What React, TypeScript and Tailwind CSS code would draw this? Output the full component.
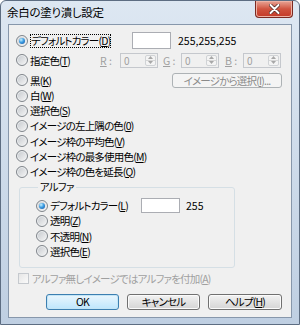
import React from "react";

const FONT = "font-['Noto_Sans_CJK_JP','Noto_Sans',sans-serif] [font-feature-settings:'palt']";

function Radio({ checked }: { checked?: boolean }) {
  return (
    <span className="flex h-[12px] w-[12px] shrink-0 items-center justify-center rounded-full border border-[#80858b] bg-gradient-to-br from-[#c4c8cd] to-[#f7f7f7] shadow-[inset_0_0_0_1px_#eef0f2]">
      {checked && (
        <span className="h-[6px] w-[6px] rounded-full bg-[radial-gradient(circle_at_35%_30%,#c9f1ff_0%,#3b9ce2_45%,#15509e_100%)]" />
      )}
    </span>
  );
}

function Label({ text, k, disabled }: { text: string; k: string; disabled?: boolean }) {
  return (
    <span className={disabled ? "text-[#a0a0a0]" : "text-black"}>
      {text}(<span className="underline underline-offset-1">{k}</span>)
    </span>
  );
}

function Option({ text, k, checked, className = "" }: { text: string; k: string; checked?: boolean; className?: string }) {
  return (
    <div className={`flex h-[15.2px] items-center gap-[2px] ${className}`}>
      <Radio checked={checked} />
      <Label text={text} k={k} />
    </div>
  );
}

function Arrow({ up }: { up?: boolean }) {
  return (
    <svg width="5" height="3" viewBox="0 0 5 3">
      <path d={up ? "M0 3 L2.5 0 L5 3 Z" : "M0 0 L2.5 3 L5 0 Z"} fill="#a7a7a7" />
    </svg>
  );
}

function Spin() {
  return (
    <div className="flex h-[15px] w-[38px] border border-[#c5c8cd] bg-[#f0f0f0]">
      <span className="flex-1 pl-[3px] text-[10px] leading-[13px] text-[#a0a0a0]">0</span>
      <div className="my-[1px] mr-[1px] flex w-[11px] flex-col rounded-[2px] border border-[#d0d3d6] bg-[#f4f4f4]">
        <span className="flex flex-1 items-center justify-center border-b border-[#d6d6d6]">
          <Arrow up />
        </span>
        <span className="flex flex-1 items-center justify-center">
          <Arrow />
        </span>
      </div>
    </div>
  );
}

function Btn({ children, primary, w }: { children: React.ReactNode; primary?: boolean; w: string }) {
  return (
    <div
      className={`flex h-[16px] items-center justify-center rounded-[3px] border ${w} ${
        primary
          ? "border-[#3c7fb1] bg-gradient-to-b from-[#eaf6fd] to-[#bee6fd] shadow-[inset_0_0_0_1px_#c4e5f6]"
          : "border-[#707070] bg-gradient-to-b from-[#f2f2f2] to-[#d5d5d5] shadow-[inset_0_0_0_1px_#fbfbfb]"
      }`}
    >
      {children}
    </div>
  );
}

export default function App() {
  return (
    <div className={`flex h-[325px] w-[300px] flex-col rounded-t-[6px] border border-[#5d6d82] bg-gradient-to-b from-[#dde7f2] to-[#bfcfe2] text-[10.5px] tracking-[-0.8px] ${FONT}`}>
      <div className="flex h-[23px] shrink-0 items-start justify-between pr-[6px]">
        <span className="pl-[6px] pt-[4px] text-[11.5px] leading-[15px] tracking-[-0.3px] text-black">余白の塗り潰し設定</span>
        <div className="flex h-[17px] w-[38px] items-center justify-center rounded-b-[4px] border border-t-0 border-[#7b2a22] bg-gradient-to-b from-[#e7a496] via-[#d0533f] to-[#c43a28] shadow-[inset_0_0_0_1px_#eeb2a4]">
          <svg width="11" height="10" viewBox="0 0 11 10">
            <path d="M1.5 1 L9.5 9 M9.5 1 L1.5 9" stroke="#4a2520" strokeWidth="3.4" strokeLinecap="round" />
            <path d="M1.5 1 L9.5 9 M9.5 1 L1.5 9" stroke="#ffffff" strokeWidth="2" strokeLinecap="round" />
          </svg>
        </div>
      </div>

      <div className="mx-[7px] flex h-[294px] w-[284px] flex-col border border-[#8797ab] bg-[#f0f0f0] pl-[7px] pt-[7px] leading-[13px]">
        {/* デフォルトカラー */}
        <div className="flex h-[17px] items-center">
          <div className="flex w-[116px] items-center gap-[2px]">
            <Radio checked />
            <span className="border border-dotted border-black leading-[12px]">
              デフォルトカラー(<span className="underline underline-offset-1">D</span>)
            </span>
          </div>
          <div className="h-[17px] w-[39px] border border-[#abadb3] bg-white" />
          <span className="ml-[7px] tracking-normal">255,255,255</span>
        </div>

        {/* 指定色 */}
        <div className="mt-[3px] flex h-[16px] items-center">
          <div className="flex w-[84px] items-center gap-[2px]">
            <Radio />
            <Label text="指定色" k="T" />
          </div>
          <span className="w-[20px] tracking-normal text-[#a0a0a0]">
            <span className="underline">R</span> :
          </span>
          <Spin />
          <span className="ml-[5px] w-[18px] tracking-normal text-[#a0a0a0]">
            <span className="underline">G</span> :
          </span>
          <Spin />
          <span className="ml-[6px] w-[18px] tracking-normal text-[#a0a0a0]">
            <span className="underline">B</span> :
          </span>
          <Spin />
        </div>

        {/* 黒 */}
        <div className="mt-[4px] flex h-[16px] items-center">
          <div className="flex items-center gap-[2px]">
            <Radio />
            <Label text="黒" k="K" />
          </div>
          <div className="ml-auto mr-[9px] flex h-[15px] w-[110px] items-center justify-center rounded-[3px] border border-[#adb2b5] bg-[#f4f4f4] text-[#8a8a8a]">
            イメージから選択(<span className="underline">I</span>)...
          </div>
        </div>

        <Option text="白" k="W" />
        <Option text="選択色" k="S" />
        <Option text="イメージの左上隅の色" k="0" />
        <Option text="イメージ枠の平均色" k="V" />
        <Option text="イメージ枠の最多使用色" k="M" />
        <Option text="イメージ枠の色を延長" k="Q" />

        {/* アルファ */}
        <fieldset className="ml-[3px] mt-[2px] w-[216px] rounded-[3px] border border-[#d5dfe5] pb-[8px] pl-[16px] pt-[5px]">
          <legend className="ml-[2px] px-[2px] leading-[12px]">アルファ</legend>
          <div className="flex h-[15.2px] items-center">
            <div className="flex w-[105px] items-center gap-[2px]">
              <Radio checked />
              <Label text="デフォルトカラー" k="L" />
            </div>
            <div className="h-[15px] w-[39px] border border-[#abadb3] bg-white" />
            <span className="ml-[6px] tracking-normal">255</span>
          </div>
          <Option text="透明" k="Z" />
          <Option text="不透明" k="N" />
          <Option text="選択色" k="E" />
        </fieldset>

        <div className="mt-[3px] flex h-[16px] items-center gap-[3px] pl-[2px]">
          <span className="h-[11px] w-[11px] border border-[#c5c9ce] bg-gradient-to-br from-[#e6e6e6] to-[#fafafa]" />
          <Label text="アルファ無しイメージではアルファを付加" k="A" disabled />
        </div>

        <div className="mt-[7px] flex justify-end gap-[8px] pr-[9px]">
          <Btn primary w="w-[73px]">OK</Btn>
          <Btn w="w-[73px]">キャンセル</Btn>
          <Btn w="w-[74px]">
            <span>
              ヘルプ(<span className="underline">H</span>)
            </span>
          </Btn>
        </div>
      </div>
    </div>
  );
}
